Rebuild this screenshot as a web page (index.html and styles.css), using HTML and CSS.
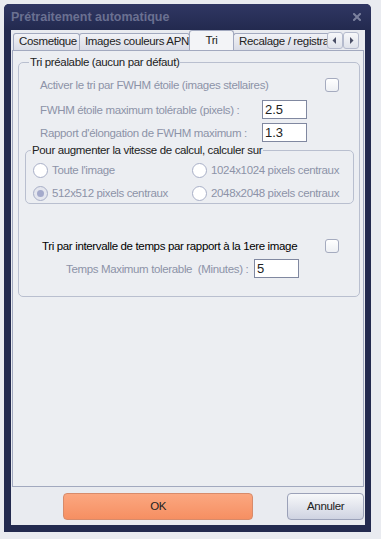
FILE: index.html
```html
<!DOCTYPE html>
<html lang="fr">
<head>
  <meta charset="UTF-8">
  <title>Prétraitement automatique</title>
  <link rel="stylesheet" href="styles.css">
</head>
<body>

<div class="window">
  <div class="titlebar">
    <span class="title">Prétraitement automatique</span>
    <svg class="close" width="8" height="8" viewBox="0 0 8 8">
      <path d="M1 1 L7 7 M7 1 L1 7" stroke="#7b819e" stroke-width="2" stroke-linecap="square"/>
    </svg>
  </div>

  <div class="client">
    <div class="tabs">
      <div class="tab" style="width:67px">Cosmetique</div>
      <div class="tab" style="width:111px">Images couleurs APN</div>
      <div class="tab active" style="width:45px">Tri</div>
      <div class="tab clip" style="width:95px">Recalage / registration</div>
      <div class="tab-arrow">
        <svg width="6" height="7" viewBox="0 0 6 7"><path d="M4 0 L4 7 L0.5 3.5 Z" fill="#4a4f66"/></svg>
      </div>
      <div class="tab-arrow">
        <svg width="6" height="7" viewBox="0 0 6 7"><path d="M2 0 L2 7 L5.5 3.5 Z" fill="#4a4f66"/></svg>
      </div>
    </div>

    <div class="panel">
      <fieldset class="group">
        <legend>Tri préalable (aucun par défaut)</legend>

        <div class="row row-first">
          <span class="label grey">Activer le tri par FWHM étoile (images stellaires)</span>
          <span class="check"></span>
        </div>
        <div class="row row-plain">
          <span class="label grey wide">FWHM étoile maximum tolérable (pixels) :</span>
          <span class="field">2.5</span>
        </div>
        <div class="row row-plain">
          <span class="label grey wide">Rapport d'élongation de FWHM maximum :</span>
          <span class="field">1.3</span>
        </div>

        <fieldset class="subgroup">
          <legend>Pour augmenter la vitesse de calcul, calculer sur</legend>
          <div class="radios">
            <label class="radio"><span class="dot"></span>Toute l'image</label>
            <label class="radio"><span class="dot"></span>1024x1024 pixels centraux</label>
            <label class="radio"><span class="dot on"></span>512x512 pixels centraux</label>
            <label class="radio"><span class="dot"></span>2048x2048 pixels centraux</label>
          </div>
        </fieldset>

        <div class="row row-time">
          <span class="label">Tri par intervalle de temps par rapport à la 1ere image</span>
          <span class="check"></span>
        </div>
        <div class="row row-indent">
          <span class="label grey short">Temps Maximum tolerable&nbsp; (Minutes) :</span>
          <span class="field">5</span>
        </div>
      </fieldset>
    </div>

    <div class="buttons">
      <button class="btn ok">OK</button>
      <button class="btn cancel">Annuler</button>
    </div>
  </div>
</div>

</body>
</html>
```

FILE: styles.css
```css
html, body {
  margin: 0;
  padding: 0;
  height: 100%;
  background-color: #e9ebf0;
  font-family: "Liberation Sans", Arial, sans-serif;
  font-size: 11.5px;
  letter-spacing: -0.35px;
  color: #000;
}

.window {
  margin: 4px 0 0 4px;
  width: 367px;
  height: 528px;
  box-sizing: border-box;
  background-color: #232a4f;
  border-radius: 5px 5px 0 0;
  padding: 0 6px 7px 7px;
  display: flex;
  flex-direction: column;
}

.titlebar {
  height: 26px;
  display: flex;
  align-items: center;
  justify-content: space-between;
  background: linear-gradient(#303763, #232a4f);
  margin: 0 -6px 0 -7px;
  padding: 0 10px 0 7px;
  border-radius: 5px 5px 0 0;
}

.title {
  font-weight: bold;
  font-size: 12.5px;
  letter-spacing: 0;
  color: #6a7091;
}

.close {
  margin-top: -1px;
}

.client {
  flex: 1;
  background-color: #e9ebf0;
  display: flex;
  flex-direction: column;
  padding: 0 1px;
}

.tabs {
  display: flex;
  align-items: flex-end;
  height: 20px;
  padding-left: 1px;
}

.tab {
  height: 17px;
  box-sizing: border-box;
  border: 1px solid #a2a9bf;
  border-bottom: none;
  border-radius: 3px 3px 0 0;
  background: linear-gradient(#f1f2f6, #d9dce6);
  color: #222;
  padding: 1px 0 0 5px;
  white-space: nowrap;
  overflow: hidden;
  margin-right: -1px;
}

.tab.active {
  height: 20px;
  background: #f3f4f7;
  padding: 3px 0 0 0;
  text-align: center;
  position: relative;
  z-index: 1;
}

.tab.clip {
  border-right: none;
  border-radius: 3px 0 0 0;
}

.tab-arrow {
  width: 16px;
  height: 17px;
  box-sizing: border-box;
  border: 1px solid #b5bbcd;
  border-radius: 3px;
  background: linear-gradient(#f7f8fa, #dfe2ea);
  display: flex;
  align-items: center;
  justify-content: center;
  margin-bottom: 1px;
}

.panel {
  height: 437px;
  box-sizing: border-box;
  border: 1px solid #a2a9bf;
  background-color: #eceef2;
  padding: 5px 3px 0 5px;
}

fieldset {
  margin: 0;
  border: 1px solid #b9bfcf;
  border-radius: 5px;
  min-width: 0;
}

legend {
  padding: 0 1px;
  color: #222;
}

.group {
  height: 241px;
  box-sizing: border-box;
  padding: 0;
}

.group > legend {
  margin-left: 10px;
}

.row {
  display: flex;
  align-items: center;
  height: 23px;
  color: #000;
  white-space: nowrap;
}

.row-first {
  margin-top: 5px;
  margin-bottom: 2px;
  padding-left: 21px;
}

.row-plain {
  padding-left: 21px;
}

.label.grey {
  color: #8d93a8;
}

.label.wide {
  width: 222px;
}

.row-first .label, .row-time .label {
  flex: 1;
}

.check {
  width: 14px;
  height: 14px;
  box-sizing: border-box;
  border: 1px solid #a5abbf;
  border-radius: 3px;
  background: linear-gradient(#ffffff, #eef0f4);
  margin-right: 20px;
}

.field {
  width: 45px;
  height: 19px;
  box-sizing: border-box;
  border: 1px solid #8088a0;
  background: #fff;
  padding: 2px 0 0 2px;
  font-size: 13px;
  letter-spacing: 0;
  line-height: 14px;
  color: #222;
}

.subgroup {
  margin: 0 5px 0 6px;
  padding: 0;
  height: 60px;
  box-sizing: border-box;
}

.subgroup legend {
  margin-left: 5px;
}

.radios {
  display: grid;
  grid-template-columns: 159px 1fr;
  padding: 6px 0 0 7px;
  row-gap: 7px;
}

.radio {
  display: flex;
  align-items: center;
  color: #8d93a8;
  height: 16px;
  white-space: nowrap;
}

.dot {
  width: 15px;
  height: 15px;
  box-sizing: border-box;
  border: 1px solid #a8afc7;
  border-radius: 50%;
  background: #fff;
  margin-right: 4px;
  display: flex;
  align-items: center;
  justify-content: center;
}

.dot.on {
  background: #e4e6ee;
}

.dot.on::after {
  content: "";
  width: 7px;
  height: 7px;
  border-radius: 50%;
  background: #a4aacb;
}

.row-time {
  margin-top: 30px;
  padding-left: 23px;
}

.row-indent {
  padding-left: 47px;
}

.label.short {
  width: 188px;
}

.buttons {
  flex: 1;
  display: flex;
  align-items: center;
  padding: 0 0 0 51px;
}

.btn {
  height: 27px;
  font-family: "Liberation Sans", Arial, sans-serif;
  font-size: 11.5px;
  letter-spacing: -0.35px;
  border-radius: 4px;
  cursor: pointer;
}

.ok {
  width: 191px;
  background: linear-gradient(#fba780, #f68f62);
  border: 1px solid #d78b6b;
  color: #222;
  margin-right: 34px;
}

.cancel {
  width: 77px;
  background: linear-gradient(#f7f8fa, #cfd3e1);
  border: 1px solid #9ba1b8;
  color: #222;
}
```
